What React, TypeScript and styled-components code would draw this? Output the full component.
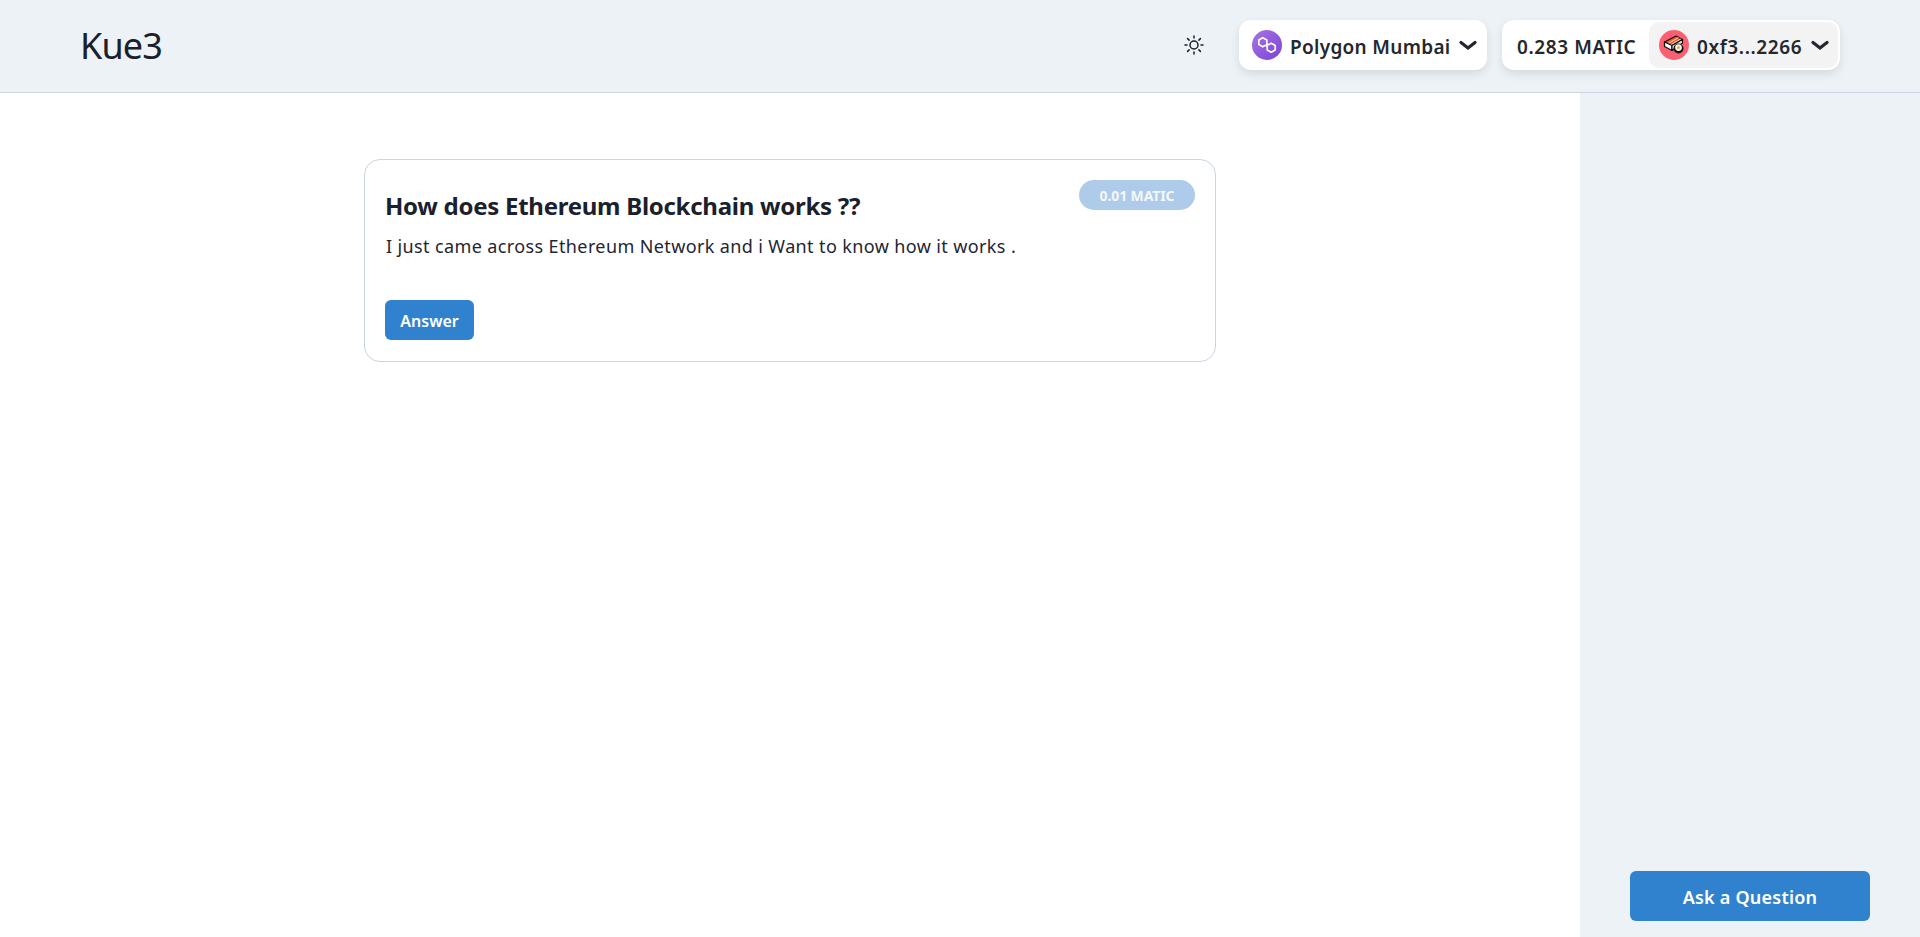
import React from "react";
import styled, { createGlobalStyle } from "styled-components";

const Global = createGlobalStyle`
  html, body { margin: 0; padding: 0; background: #fff; }
  body { font-family: "Noto Sans", "Open Sans", "Liberation Sans", sans-serif; color: #1a202c; }
  * { box-sizing: border-box; }
`;

const Page = styled.div`
  height: 937px;
  display: flex;
  flex-direction: column;
  overflow: hidden;
`;

const Header = styled.header`
  height: 93px;
  flex: none;
  display: flex;
  align-items: center;
  padding: 0 80px 2px 80px;
  background: #edf2f7;
  border-bottom: 1px solid #cbd5e0;
`;

const Logo = styled.div`
  font-size: 36px;
  line-height: 46px;
  padding-top: 2px;
  font-weight: 400;
  letter-spacing: -0.9px;
  color: #1a202c;
  margin-right: auto;
`;

const ThemeToggle = styled.button`
  width: 24px;
  height: 24px;
  padding: 0;
  margin-right: 33px;
  border: 0;
  background: none;
  color: #1a202c;
  display: flex;
  align-items: center;
  justify-content: center;
`;

const Pill = styled.div`
  height: 50px;
  display: flex;
  align-items: center;
  background: #fff;
  border-radius: 12px;
  box-shadow: 0 4px 10px rgba(0, 0, 0, 0.1);
  font-size: 19px;
  font-weight: 600;
  color: #24272e;
  white-space: nowrap;
`;

const NetworkPill = styled(Pill)`
  width: 248px;
  padding-left: 13px;
  margin-right: 15px;
  letter-spacing: 0.3px;
`;

const WalletPill = styled(Pill)`
  width: 338px;
  padding: 2px;
`;

const PillLabel = styled.span`
  padding-top: 4px;
`;

const Balance = styled(PillLabel)`
  padding-left: 13px;
  width: 145px;
  letter-spacing: 0.6px;
`;

const Address = styled.div`
  flex: 1;
  height: 46px;
  display: flex;
  align-items: center;
  padding-left: 10px;
  border-radius: 10px;
  background: #f3f3f3;
  letter-spacing: 0.6px;
`;

const Avatar = styled.span`
  width: 30px;
  height: 30px;
  flex: none;
  display: block;
  margin-right: 8px;
  svg { display: block; }
`;

const Chevron = styled.svg`
  width: 18px;
  height: 12px;
  margin-left: 9px;
  flex: none;
`;

const Body = styled.div`
  flex: 1;
  display: flex;
  min-height: 0;
`;

const Main = styled.main`
  flex: 1;
  display: flex;
  justify-content: center;
  align-items: flex-start;
  padding-top: 66px;
`;

const Card = styled.article`
  position: relative;
  width: 852px;
  height: 203px;
  padding: 28px 20px 21px;
  border: 1px solid #cbd5e0;
  border-radius: 16px;
  display: flex;
  flex-direction: column;
  align-items: flex-start;
`;

const Badge = styled.span`
  position: absolute;
  top: 20px;
  right: 20px;
  width: 116px;
  height: 30px;
  border-radius: 15px;
  background: #aecbea;
  color: #f4f7fa;
  font-size: 14px;
  font-weight: 700;
  letter-spacing: -0.12px;
  display: flex;
  align-items: center;
  justify-content: center;
`;

const Title = styled.h2`
  margin: 0;
  font-size: 24px;
  line-height: 36px;
  font-weight: 700;
  letter-spacing: -0.27px;
  color: #1a202c;
`;

const Description = styled.p`
  margin: 8px 0 0 1px;
  font-size: 18px;
  line-height: 28px;
  letter-spacing: 0.38px;
  color: #1f2534;
`;

const Button = styled.button`
  border: 0;
  background: #3182ce;
  color: #fff;
  font-family: inherit;
  font-weight: 600;
  display: flex;
  align-items: center;
  justify-content: center;
`;

const AnswerButton = styled(Button)`
  width: 89px;
  height: 40px;
  margin-top: auto;
  padding-top: 2px;
  border-radius: 6px;
  font-size: 16px;
`;

const Sidebar = styled.aside`
  width: 340px;
  flex: none;
  background: #edf2f7;
  display: flex;
  flex-direction: column;
  justify-content: flex-end;
  align-items: center;
  padding-bottom: 16px;
`;

const AskButton = styled(Button)`
  width: 240px;
  height: 50px;
  padding-top: 2px;
  border-radius: 6px;
  font-size: 18px;
  letter-spacing: 0.22px;
`;

const DownChevron = () => (
  <Chevron viewBox="0 0 18 12" fill="none" stroke="#24272e" strokeWidth="3.2" strokeLinecap="round" strokeLinejoin="miter">
    <path d="M2 3.5 L9 9 L16 3.5" />
  </Chevron>
);

const SunIcon = () => (
  <svg width="20" height="20" viewBox="0 0 20 20" fill="none" stroke="currentColor" strokeWidth="1.5" strokeLinecap="round">
    <circle cx="10" cy="10" r="4" />
    <path d="M10 1v2M10 17v2M1 10h2M17 10h2M3.6 3.6l1.5 1.5M14.9 14.9l1.5 1.5M3.6 16.4l1.5-1.5M14.9 5.1l1.5-1.5" />
  </svg>
);

const PolygonLogo = () => (
  <svg width="30" height="30" viewBox="0 0 30 30">
    <defs>
      <linearGradient id="poly" x1="0" y1="0" x2="1" y2="1">
        <stop offset="0" stopColor="#a874e4" />
        <stop offset="1" stopColor="#7a42d8" />
      </linearGradient>
    </defs>
    <circle cx="15" cy="15" r="15" fill="url(#poly)" />
    <path
      d="M14.8 12.6 V10 L10.8 7.8 L6.8 10 V14.6 L10.8 16.8 L13 15.6 L17 14.4 L19.2 13.2 L23.2 15.4 V20 L19.2 22.2 L15.2 20 V17.4 L14.8 12.6"
      fill="none"
      stroke="#fff"
      strokeWidth="1.7"
      strokeLinejoin="round"
    />
  </svg>
);

const SushiAvatar = () => (
  <svg width="30" height="30" viewBox="0 0 30 30">
    <circle cx="15" cy="15" r="15" fill="#fd5f72" />
    <path d="M5.5 12 L17 6 L23.5 9.5 L13 15.5 Z" fill="#f1592e" stroke="#111" strokeWidth="1.3" strokeLinejoin="round" />
    <path d="M8.5 13.8 L19.5 7.6 M11.5 15 L21.8 9" stroke="#ffd7c2" strokeWidth="1" />
    <path d="M5.5 12 L13 15.5 L13 20.5 L5.5 16.5 Z" fill="#fff" stroke="#111" strokeWidth="1.3" strokeLinejoin="round" />
    <path d="M13 15.5 L23.5 9.5 L23.5 13 L13 20.5 Z" fill="#fbeee6" stroke="#111" strokeWidth="1.2" strokeLinejoin="round" />
    <circle cx="19.5" cy="18.5" r="5" fill="#111" />
    <circle cx="19.5" cy="17.6" r="3.4" fill="#f4f4f0" />
    <circle cx="19.5" cy="17.6" r="1.5" fill="#f3a93a" />
  </svg>
);

export default function App() {
  return (
    <Page>
      <Global />
      <Header>
        <Logo>Kue3</Logo>
        <ThemeToggle aria-label="Toggle theme"><SunIcon /></ThemeToggle>
        <NetworkPill>
          <Avatar><PolygonLogo /></Avatar>
          <PillLabel>Polygon Mumbai</PillLabel>
          <DownChevron />
        </NetworkPill>
        <WalletPill>
          <Balance>0.283 MATIC</Balance>
          <Address>
            <Avatar><SushiAvatar /></Avatar>
            <PillLabel>0xf3...2266</PillLabel>
            <DownChevron />
          </Address>
        </WalletPill>
      </Header>
      <Body>
        <Main>
          <Card>
            <Badge>0.01 MATIC</Badge>
            <Title>How does Ethereum Blockchain works ??</Title>
            <Description>I just came across Ethereum Network and i Want to know how it works .</Description>
            <AnswerButton>Answer</AnswerButton>
          </Card>
        </Main>
        <Sidebar>
          <AskButton>Ask a Question</AskButton>
        </Sidebar>
      </Body>
    </Page>
  );
}
